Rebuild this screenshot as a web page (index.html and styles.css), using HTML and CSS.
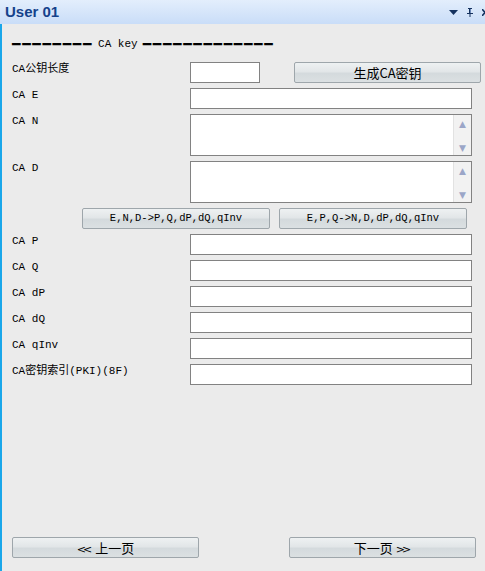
FILE: index.html
```html
<!DOCTYPE html>
<html lang="zh">
<head>
    <meta charset="UTF-8">
    <title>User 01</title>
    <link rel="stylesheet" href="styles.css">
</head>
<body>

<!-- Barra de título -->
<div class="titlebar">
    <span class="title">User 01</span>
    <div class="tools">
        <svg width="9" height="5" viewBox="0 0 9 5"><path d="M0 0H9L4.5 5Z" fill="#15325f"/></svg>
        <svg width="8" height="9" viewBox="0 0 8 9"><path d="M2 0H6V1H5V5H7V6H4.5V9H3.5V6H1V5H3V1H2Z" fill="#15325f"/><path d="M4 1H5V5H4Z" fill="#6b88b8"/></svg>
        <svg width="6" height="7" viewBox="0 0 6 7"><path d="M0 0L6 7M6 0L0 7" stroke="#15325f" stroke-width="1.6"/></svg>
    </div>
</div>

<div class="panel">
    <div class="section">
        <span class="dash">━━━━━━━━</span>
        <span>CA key</span>
        <span class="dash">━━━━━━━━━━━━━</span>
    </div>

    <div class="row">
        <label>CA公钥长度</label>
        <input type="text" class="short">
        <button class="btn gen">生成CA密钥</button>
    </div>
    <div class="row">
        <label>CA E</label>
        <input type="text">
    </div>
    <div class="row">
        <label>CA N</label>
        <div class="area">
            <textarea></textarea>
            <div class="scroll"><span>▲</span><span>▼</span></div>
        </div>
    </div>
    <div class="row">
        <label>CA D</label>
        <div class="area">
            <textarea></textarea>
            <div class="scroll"><span>▲</span><span>▼</span></div>
        </div>
    </div>
    <div class="row calc">
        <button class="btn mono">E,N,D-&gt;P,Q,dP,dQ,qInv</button>
        <button class="btn mono">E,P,Q-&gt;N,D,dP,dQ,qInv</button>
    </div>
    <div class="row">
        <label>CA P</label>
        <input type="text">
    </div>
    <div class="row">
        <label>CA Q</label>
        <input type="text">
    </div>
    <div class="row">
        <label>CA dP</label>
        <input type="text">
    </div>
    <div class="row">
        <label>CA dQ</label>
        <input type="text">
    </div>
    <div class="row">
        <label>CA qInv</label>
        <input type="text">
    </div>
    <div class="row">
        <label>CA密钥索引(PKI)(8F)</label>
        <input type="text">
    </div>

    <!-- Navegación -->
    <div class="nav">
        <button class="btn page"><span class="chev">&lt;&lt;</span> 上一页</button>
        <button class="btn page">下一页 <span class="chev">&gt;&gt;</span></button>
    </div>
</div>

</body>
</html>
```

FILE: styles.css
```css
body {
    margin: 0;
    height: 571px;
    display: flex;
    flex-direction: column;
    background-color: #ebebeb;
    font-family: "Liberation Mono", "Noto Sans CJK SC", monospace;
    font-size: 11px;
    color: #000;
    overflow: hidden;
}

.titlebar {
    height: 24px;
    flex: none;
    display: flex;
    align-items: center;
    justify-content: space-between;
    background: linear-gradient(#e3eefc, #c9ddf8);
    padding-left: 5px;
}

.title {
    font-family: "Liberation Sans", Arial, sans-serif;
    font-weight: bold;
    font-size: 15px;
    color: #15428b;
    margin-top: -2px;
}

.tools {
    display: flex;
    align-items: center;
    gap: 8px;
    margin-right: -3px;
}

.panel {
    flex: 1;
    display: flex;
    flex-direction: column;
    border-left: 2px solid #1aa7ea;
    padding: 0 13px 13px 10px;
}

.section {
    height: 38px;
    display: flex;
    align-items: center;
    gap: 5px;
    padding-top: 1px;
    box-sizing: border-box;
}

.dash {
    font-family: "DejaVu Sans Mono", monospace;
    font-size: 14px;
    letter-spacing: 1.7px;
}

.row {
    display: flex;
    align-items: flex-start;
    margin-bottom: 5px;
}

label {
    width: 178px;
    flex: none;
    line-height: 15px;
}

input[type="text"] {
    width: 282px;
    height: 21px;
    flex: none;
    box-sizing: border-box;
    border: 1px solid #828282;
    background-color: #fff;
    margin: 0;
    padding: 0 3px;
}

input.short {
    width: 70px;
}

.area {
    width: 282px;
    height: 42px;
    box-sizing: border-box;
    border: 1px solid #828282;
    background-color: #fff;
    display: flex;
}

textarea {
    flex: 1;
    border: none;
    resize: none;
    outline: none;
    padding: 2px 3px;
}

.scroll {
    width: 17px;
    background-color: #f2f2f2;
    border-left: 1px solid #e2e2e2;
    display: flex;
    flex-direction: column;
    justify-content: space-between;
    align-items: center;
    color: #9ba6c8;
    font-family: "DejaVu Sans", sans-serif;
    font-size: 9px;
    line-height: 10px;
    padding: 4px 0 2px;
}

.btn {
    height: 21px;
    flex: none;
    box-sizing: border-box;
    border: 1px solid #9ea6ab;
    border-radius: 2px;
    background: linear-gradient(#eef1f2, #e2e6e8 45%, #d4dadd 55%, #dbe0e2);
    padding: 0;
    margin: 0;
    color: #000;
    font-family: "Noto Sans CJK SC", sans-serif;
    font-size: 13px;
    line-height: 19px;
    cursor: pointer;
}

.gen {
    width: 187px;
    margin-left: 34px;
}

.calc {
    padding-left: 70px;
    gap: 9px;
}

.btn.mono {
    width: 188px;
    font-family: "Liberation Mono", monospace;
    font-size: 10.5px;
}

.nav {
    margin-top: auto;
    display: flex;
    justify-content: space-between;
    margin-right: -4px;
}

.btn.page {
    width: 187px;
    font-size: 13px;
}

.chev {
    font-family: "DejaVu Sans", sans-serif;
    font-size: 11px;
    letter-spacing: -3px;
    margin-right: 3px;
}
```
